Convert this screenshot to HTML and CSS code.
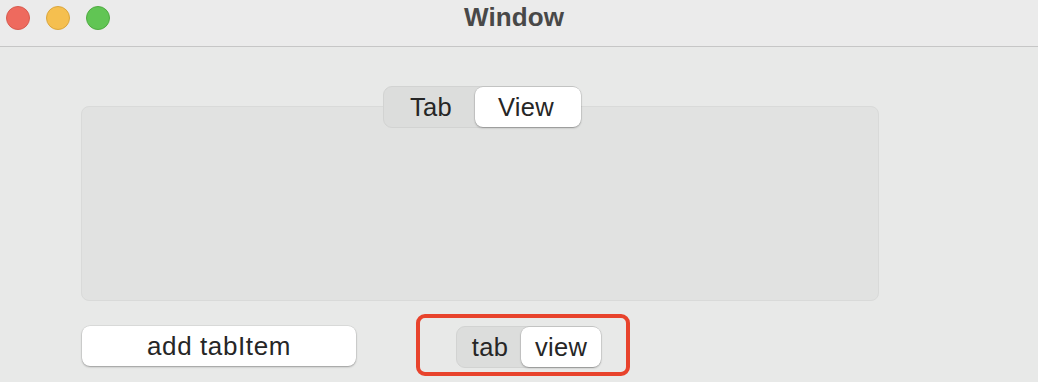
FILE: index.html
```html
<!DOCTYPE html>
<html>
<head>
<meta charset="utf-8">
<link rel="stylesheet" href="styles.css">
</head>
<body>
<div class="window">
  <header class="titlebar">
    <div class="lights">
      <span class="light red"></span>
      <span class="light yellow"></span>
      <span class="light green"></span>
    </div>
    <div class="title">Window</div>
  </header>
  <main class="content">
    <section class="tabview">
      <div class="seg seg-top">
        <div class="seg-item w-tab">Tab</div>
        <div class="seg-item selected w-view">View</div>
      </div>
      <div class="tabbox"></div>
    </section>
    <div class="bottom-row">
      <button class="btn">add tabItem</button>
      <div class="highlight">
        <div class="seg seg-small">
          <div class="seg-item w-tab2">tab</div>
          <div class="seg-item selected w-view2">view</div>
        </div>
      </div>
    </div>
  </main>
</div>
</body>
</html>
```
FILE: styles.css
```css
* { box-sizing: border-box; }
html, body { margin: 0; padding: 0; }
body {
  width: 1038px;
  height: 382px;
  overflow: hidden;
  font-family: "Liberation Sans", Arial, sans-serif;
  background: #e8e9e8;
  color: #262626;
}
.window {
  width: 1038px;
  height: 382px;
  display: flex;
  flex-direction: column;
  background: #e8e9e8;
}
.titlebar {
  height: 47px;
  flex: none;
  background: #ebebeb;
  border-bottom: 1px solid #c6c6c6;
  display: flex;
  align-items: center;
}
.lights {
  display: flex;
  gap: 16px;
  padding-left: 6px;
  margin-top: -11px;
}
.light {
  width: 24px;
  height: 24px;
  border-radius: 50%;
  display: block;
}
.red { background: #ee6a5e; border: 1px solid #d85b4f; }
.yellow { background: #f5bf4f; border: 1px solid #dba63c; }
.green { background: #61c554; border: 1px solid #4fab41; }
.title {
  flex: 1;
  text-align: center;
  font-weight: bold;
  font-size: 26px;
  color: #484848;
  margin-left: -120px;
  margin-top: -11px;
  letter-spacing: 0.1px;
}
.content {
  flex: 1;
  padding: 39px 0 0 81px;
  display: flex;
  flex-direction: column;
}
.tabview {
  width: 798px;
  display: flex;
  flex-direction: column;
  align-items: center;
}
.seg {
  display: flex;
  background: #dcdddc;
  border: 1px solid #d2d3d2;
  border-radius: 9px;
  height: 42px;
  position: relative;
  z-index: 1;
}
.seg-top {
  margin-bottom: -22px;
  margin-left: 4px;
}
.seg-item {
  display: flex;
  align-items: center;
  justify-content: center;
  font-size: 25.5px;
  color: #262626;
  letter-spacing: 0.3px;
}
.seg-item.selected {
  background: #fff;
  border-radius: 8px;
  margin-right: -1px;
  box-shadow: 0 0 0 0.5px rgba(0,0,0,0.12), 0 1px 2px rgba(0,0,0,0.28);
}
.w-tab { width: 91px; padding-left: 3px; }
.w-view { width: 106px; padding-right: 4px; }
.w-tab2 { width: 64px; padding-left: 2px; }
.w-view2 { width: 80px; }
.tabbox {
  width: 798px;
  height: 195px;
  background: #e1e2e1;
  border: 1px solid #d9dad9;
  border-radius: 8px;
}
.bottom-row {
  display: flex;
  align-items: flex-start;
  margin-top: 13px;
  gap: 60px;
}
.btn {
  margin-top: 12px;
  width: 274px;
  height: 40px;
  margin-left: 1px;
  background: #fff;
  border: none;
  border-radius: 8px;
  box-shadow: 0 0 0 0.5px rgba(0,0,0,0.1), 0 1px 2px rgba(0,0,0,0.3);
  font-family: "Liberation Sans", Arial, sans-serif;
  font-size: 26px;
  color: #262626;
  padding: 0;
  letter-spacing: 0.6px;
}
.highlight {
  border: 4px solid #e8432c;
  border-radius: 9px;
  padding: 8px 25px 4px 36px;
}
.seg-small {
  height: 42px;
}
```
